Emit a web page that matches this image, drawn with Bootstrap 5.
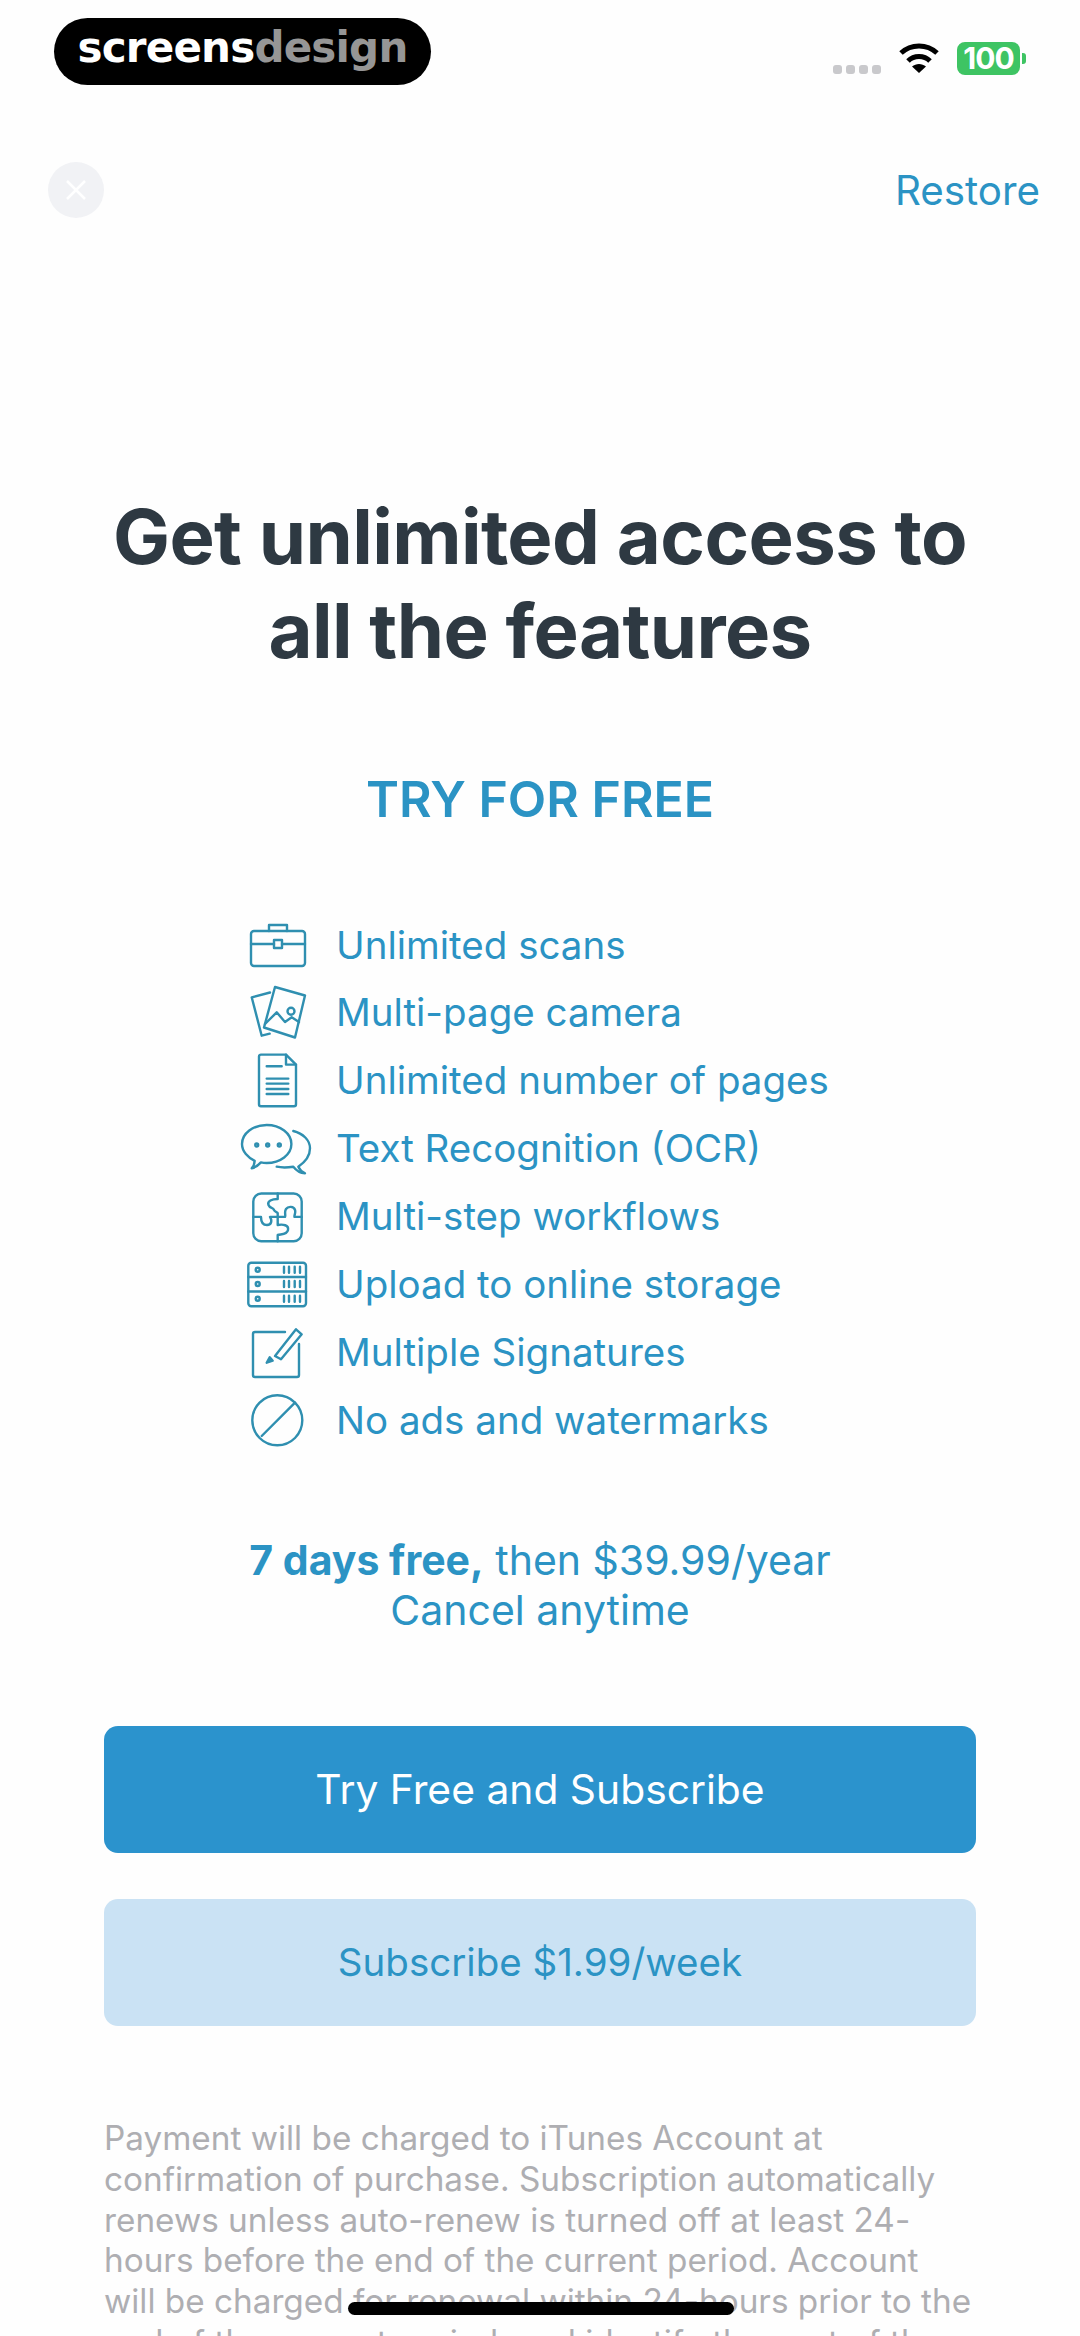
<!DOCTYPE html>
<html lang="en">
<head>
  <meta charset="UTF-8" />
  <meta name="viewport" content="width=device-width, initial-scale=1.0"/>
  <title>Get unlimited access</title>
  <link href="https://cdn.jsdelivr.net/npm/bootstrap@5.3.3/dist/css/bootstrap.min.css" rel="stylesheet">
  <style>
    html, body { height: 2336px; overflow: hidden; }
    body { background: #fefefe; font-family: Inter, "Liberation Sans", sans-serif; color: #2b93c4; position: relative; }
    .rec-pill { position: absolute; left: 54px; top: 18px; width: 377px; height: 67px; background: #000; border-radius: 34px; font-family: "DejaVu Sans", sans-serif; font-weight: 700; font-size: 42px; letter-spacing: -.8px; line-height: 60px; }
    .rec-pill span { color: #969696; }
    .rec-status { height: 76px; padding-right: 60px; padding-top: 42px; gap: 18px; }
    .rec-dots { gap: 4px; margin-top: 23px; }
    .rec-dots i { width: 9px; height: 9px; border-radius: 3px; background: #c9c9cc; display: block; }
    .rec-wifi { margin-top: 1px; }
    .rec-batt { width: 63px; height: 33px; background: #3ec463; border-radius: 8px; color: #fff; font-size: 30px; font-weight: 700; line-height: 33px; text-align: center; position: relative; letter-spacing: -1px; }
    .rec-batt::after { content: ""; position: absolute; right: -6px; top: 11px; width: 4px; height: 11px; background: #3ec463; border-radius: 0 3px 3px 0; }
    .rec-top { height: 56px; margin-top: 86px; padding: 0 40px 0 48px; }
    .rec-close { width: 56px; height: 56px; border-radius: 50%; background: #f1f2f5; border: 0; padding: 0; }
    .rec-restore { font-size: 40.3px; line-height: 58px; padding-top: 2px; color: #2b93c4; }
    .rec-title { font-size: 76px; line-height: 94px; font-weight: 700; color: #2e3942; margin: 270.5px 0 0; letter-spacing: -.6px; }
    .rec-try { font-size: 50px; line-height: 60px; font-weight: 600; margin: 92.5px 0 0; }
    .rec-list { margin: 82.5px 0 0 237px; padding: 0; list-style: none; }
    .rec-list li { height: 67.9px; font-size: 38.5px; font-weight: 440; gap: 19px; }
    .rec-list svg { width: 80px; height: 60px; flex: none; fill: none; stroke: #2f8fb0; stroke-width: 2.4; stroke-linecap: round; stroke-linejoin: round; }
    .rec-price { font-size: 41px; line-height: 50px; margin-top: 80.5px; }
    .rec-price b { font-weight: 700; }
    .rec-btns { margin: 91px 104px 0; gap: 46px; }
    .rec-btn { height: 127px; border-radius: 14px; border: 0; }
    .rec-primary { background: #2b93cd; color: #fff; font-size: 40.8px; }
    .rec-soft { background: #cae2f4; color: #2b93c4; font-size: 38.5px; }
    .rec-legal { font-size: 33.3px; line-height: 40.7px; color: #aeaeb2; margin: 92px 0 0; padding: 0 104px; }
    .rec-home { position: absolute; left: 348px; top: 2302px; width: 386px; height: 13px; background: #000; border-radius: 7px; }
  </style>
</head>
<body>

  <div class="rec-pill text-white text-center">screens<span>design</span></div>

  <!-- status bar -->
  <div class="rec-status d-flex justify-content-end align-items-start">
    <div class="rec-dots d-flex"><i></i><i></i><i></i><i></i></div>
    <svg class="rec-wifi" width="40" height="30" viewBox="0 0 40 30" fill="none" stroke="#000" stroke-width="5"><path d="M2 10C12 .5 28 .5 38 10"/><path d="M9 18C15 12 25 12 31 18"/><path d="M20 30l-7-6.500c4-3.500 10-3.500 14 0z" fill="#000" stroke="none"/></svg>
    <div class="rec-batt">100</div>
  </div>

  <div class="rec-top d-flex justify-content-between align-items-center">
    <button type="button" class="rec-close d-flex align-items-center justify-content-center" aria-label="Close">
      <svg width="24" height="24" viewBox="0 0 24 24" stroke="#fff" stroke-width="2.500"><path d="M3 3l18 18M21 3L3 21"/></svg>
    </button>
    <span class="rec-restore">Restore</span>
  </div>

  <h1 class="rec-title text-center">Get unlimited access to<br>all the features</h1>
  <div class="rec-try text-center">TRY FOR FREE</div>

  <ul class="rec-list">
    <li class="d-flex align-items-center">
      <svg viewBox="0 0 80 60"><rect x="14" y="16" width="54" height="35" rx="3"/><path d="M32 16v-6h18v6M14 29h23M45 29h23"/><rect x="37" y="25" width="8" height="8"/></svg>
      Unlimited scans</li>
    <li class="d-flex align-items-center">
      <svg viewBox="0 0 80 60"><path d="M38 4l30 8.500-10 42-31-10z"/><path d="M33 9.500L14.700 14.300l10 38.400 8-2"/><circle cx="54" cy="28.300" r="3.500"/><path d="M28 41l11.700-11.700L48 39l6.700-4.700L62 39"/></svg>
      Multi-page camera</li>
    <li class="d-flex align-items-center">
      <svg viewBox="0 0 80 60"><path d="M24 3.600h25l10 10v39.700a2 2 0 0 1-2 2H24a2 2 0 0 1-2-2V5.600a2 2 0 0 1 2-2z"/><path d="M49 3.600v10h10M29.700 15.300h15M29.700 27.600h21.600M29.700 32.600h21.600M29.700 38h21.600M29.700 43h21.600"/></svg>
      Unlimited number of pages</li>
    <li class="d-flex align-items-center">
      <svg viewBox="0 0 80 60"><path d="M29.700 6c13.600 0 24.700 8.500 24.700 19s-11.100 19-24.700 19c-2 0-4-.2-5.800-.6-2.500 2.800-5.500 5-9.200 5.900 2-2 2.800-4.300 3-7.500C11 38.700 5 32.400 5 25 5 14.500 16.100 6 29.700 6z"/><path d="M56.300 12C66 14.500 73 21 73 29.300c0 7-3.700 13-11.700 18.400 1.200 2.700 3.500 5 6.700 6.600-4.500-.3-8.500-2.500-11.700-6.600-6 1-12 1-16.600 0"/><circle cx="19.700" cy="26" r="1.500"/><circle cx="30.700" cy="26" r="1.500"/><circle cx="42.300" cy="26" r="1.500"/></svg>
      Text Recognition (OCR)</li>
    <li class="d-flex align-items-center">
      <svg viewBox="0 0 80 60"><rect x="16.300" y="6.500" width="48.400" height="47.700" rx="8"/><path d="M40.700 6.500V12C35 12 30 14 31.500 18C33 22 36 20 37 23C37.500 25 40.700 25 40.700 26V38C46 37 52 38 51 43C50 48 44 47 40.700 48V54.200"/><path d="M16.300 29.900H24C24 33 25 38 30 38C35 38 35 33 33 29.900H48C49 28 47 25 49 22C51 19 57 19 58 23C59 26 57 28 57.500 29.900H64.700"/></svg>
      Multi-step workflows</li>
    <li class="d-flex align-items-center">
      <svg viewBox="0 0 80 60"><rect x="11.300" y="7.800" width="57.700" height="43.400" rx="3"/><path d="M11.300 22h57.700M11.300 36.500h57.700M47 11.800v6M52 11.800v6M57.700 11.800v6M63 11.800v6M47 26v6M52 26v6M57.700 26v6M63 26v6M47 40.800v6M52 40.800v6M57.700 40.800v6M63 40.800v6"/><circle cx="20.700" cy="14.800" r="2"/><circle cx="20.700" cy="29" r="2"/><circle cx="20.700" cy="43.800" r="2"/></svg>
      Upload to online storage</li>
    <li class="d-flex align-items-center">
      <svg viewBox="0 0 80 60"><path d="M48 9H18a2 2 0 0 0-2 2v41a2 2 0 0 0 2 2h42a2 2 0 0 0 2-2V21"/><path d="M38 33L59 6.300l5.700 5L44 36.300z"/><path d="M29.700 39.700l3-5.500 3 3.500z" fill="#2f8fb0"/></svg>
      Multiple Signatures</li>
    <li class="d-flex align-items-center">
      <svg viewBox="0 0 80 60"><circle cx="40.300" cy="29.300" r="25"/><path d="M24.700 45L58 11.700"/></svg>
      No ads and watermarks</li>
  </ul>

  <div class="rec-price text-center"><b>7 days free,</b> then $39.99/year<br>Cancel anytime</div>

  <div class="rec-btns d-flex flex-column">
    <button type="button" class="btn rec-btn rec-primary">Try Free and Subscribe</button>
    <button type="button" class="btn rec-btn rec-soft">Subscribe $1.99/week</button>
  </div>

  <p class="rec-legal">Payment will be charged to iTunes Account at confirmation of purchase. Subscription automatically renews unless auto-renew is turned off at least 24-hours before the end of the current period. Account will be charged for renewal within 24-hours prior to the end of the current period, and identify the cost of the renewal.</p>

  <div class="rec-home"></div>

  <script src="https://cdn.jsdelivr.net/npm/bootstrap@5.3.3/dist/js/bootstrap.bundle.min.js"></script>
</body>
</html>
